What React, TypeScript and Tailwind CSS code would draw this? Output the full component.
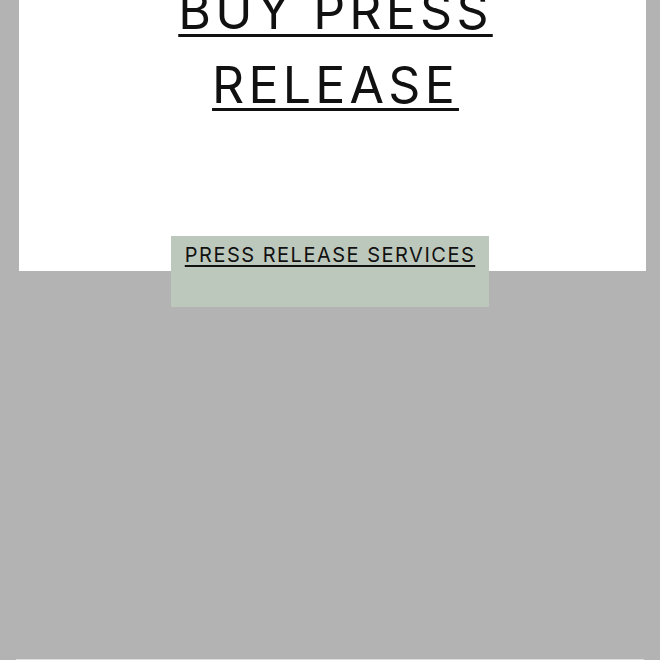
export default function App() {
  return (
    <div className="min-h-[660px] w-[660px] bg-[#b3b3b3] font-['Inter',sans-serif] text-[#111]">
      {/* Hero card */}
      <section className="ml-[19px] w-[627px] h-[271px] bg-white overflow-hidden">
        <h1 className="-mt-[26px] text-center text-[50px] leading-[74px] font-normal tracking-[0.085em] underline decoration-[3px] underline-offset-[5px] pl-[6px]">
          BUY PRESS
          <br />
          RELEASE
        </h1>
      </section>

      {/* Services tag */}
      <div className="-mt-[35px] ml-[171px] w-[318px] h-[71px] bg-[#bdc8bc] pt-[5px] text-center">
        <a href="#" className="text-[20px] leading-[28px] tracking-[0.075em] underline decoration-[1.5px] underline-offset-[3px]">
          PRESS RELEASE SERVICES
        </a>
      </div>

      {/* Next card edge */}
      <div className="mt-[352px] ml-[16px] w-[628px] h-[4px] bg-[#dedede]" />
    </div>
  );
}
